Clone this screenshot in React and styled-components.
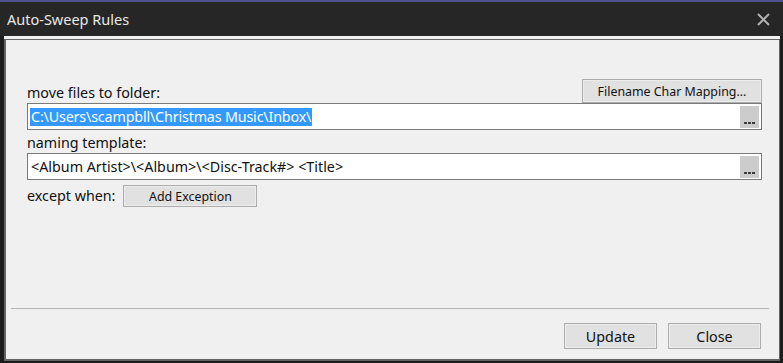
import React from "react";
import styled, { createGlobalStyle } from "styled-components";

//#region Styled Components
const GlobalStyle = createGlobalStyle`
  html, body {
    margin: 0;
    padding: 0;
    background: #1c1c1c;
  }
  #root {
    width: 783px;
    height: 363px;
  }
`;

const Window = styled.div`
  display: flex;
  flex-direction: column;
  width: 783px;
  height: 363px;
  font-family: "Noto Sans", "Open Sans", sans-serif;
`;

const TitleBar = styled.div`
  display: flex;
  align-items: center;
  justify-content: space-between;
  height: 34px;
  border-top: 2px solid #50508c;
  background: #262626;
  padding: 0 13px 0 7px;
  color: #e8e8e8;
  font-size: 14.5px;
`;

const CloseGlyph = styled.svg`
  width: 13px;
  height: 13px;
  display: block;
`;

const Body = styled.div`
  flex: 1;
  display: flex;
  margin: 0 3px 2px 4px;
  padding-top: 3px;
  background: #f0f0f0;
`;

const Panel = styled.div`
  flex: 1;
  display: flex;
  flex-direction: column;
  border: 1px solid #646464;
  border-left-width: 2px;
  border-bottom-width: 2px;
`;

const Content = styled.div`
  flex: 1;
  display: flex;
  flex-direction: column;
  padding: 39px 17px 0 21px;
`;

const LabelRow = styled.div`
  display: flex;
  align-items: flex-end;
  justify-content: space-between;
  height: ${(p) => p.$h || 20}px;
`;

const Label = styled.span`
  font-size: 14.3px;
  color: #111;
  line-height: 20px;
`;

const SmallButton = styled.button`
  font-family: inherit;
  font-size: 12.4px;
  color: #111;
  width: ${(p) => p.$w}px;
  height: ${(p) => p.$h}px;
  padding: 0;
  background: #e1e1e1;
  border: 1px solid #adadad;
  box-shadow: inset 0 0 0 1px #ececec;
`;

const Field = styled.div`
  display: flex;
  align-items: center;
  justify-content: space-between;
  height: 25px;
  background: #fff;
  border: 1px solid #7a7a7a;
  padding: 0 2px 0 2px;
`;

const FieldText = styled.span`
  font-size: 14.3px;
  line-height: 18px;
  padding: 0 1px;
  letter-spacing: ${(p) => (p.$selected ? "-0.16px" : "0")};
  color: ${(p) => (p.$selected ? "#fff" : "#111")};
  background: ${(p) => (p.$selected ? "#3399ff" : "transparent")};
  white-space: nowrap;
`;

const BrowseButton = styled.div`
  display: flex;
  align-items: flex-end;
  justify-content: center;
  gap: 1px;
  width: 19px;
  height: 22px;
  box-sizing: border-box;
  padding-bottom: 4px;
  background: #cccccc;
`;

const Dot = styled.span`
  width: 3px;
  height: 2px;
  background: #3c3c3c;
`;

const ExceptRow = styled.div`
  display: flex;
  align-items: center;
  gap: 8px;
  margin-top: 5px;
`;

const Separator = styled.div`
  height: 1px;
  background: #b4b4b4;
  margin: auto 10px 0 5px;
`;

const Footer = styled.div`
  display: flex;
  justify-content: flex-end;
  gap: 11px;
  padding: 14px 18px 10px 0;
`;

const DialogButton = styled(SmallButton)`
  font-size: 14.3px;
`;
//#endregion

const Browse = () => (
  <BrowseButton>
    <Dot />
    <Dot />
    <Dot />
  </BrowseButton>
);

const App = () => {
  return (
    <Window>
      <GlobalStyle />
      <TitleBar>
        <span>Auto-Sweep Rules</span>
        <CloseGlyph viewBox="0 0 13 13">
          <path d="M1 1 L12 12 M12 1 L1 12" stroke="#b0b0b0" strokeWidth="2" />
        </CloseGlyph>
      </TitleBar>
      <Body>
        <Panel>
          <Content>
            <LabelRow $h={24}>
              <Label>move files to folder:</Label>
              <SmallButton $w={180} $h={24}>Filename Char Mapping...</SmallButton>
            </LabelRow>
            <Field>
              <FieldText $selected>C:\Users\scampbll\Christmas Music\Inbox\</FieldText>
              <Browse />
            </Field>
            <LabelRow $h={23}>
              <Label>naming template:</Label>
            </LabelRow>
            <Field>
              <FieldText>&lt;Album Artist&gt;\&lt;Album&gt;\&lt;Disc-Track#&gt; &lt;Title&gt;</FieldText>
              <Browse />
            </Field>
            <ExceptRow>
              <Label>except when:</Label>
              <SmallButton $w={134} $h={22}>Add Exception</SmallButton>
            </ExceptRow>
          </Content>
          <Separator />
          <Footer>
            <DialogButton $w={93} $h={26}>Update</DialogButton>
            <DialogButton $w={93} $h={26}>Close</DialogButton>
          </Footer>
        </Panel>
      </Body>
    </Window>
  );
};

export default App;
